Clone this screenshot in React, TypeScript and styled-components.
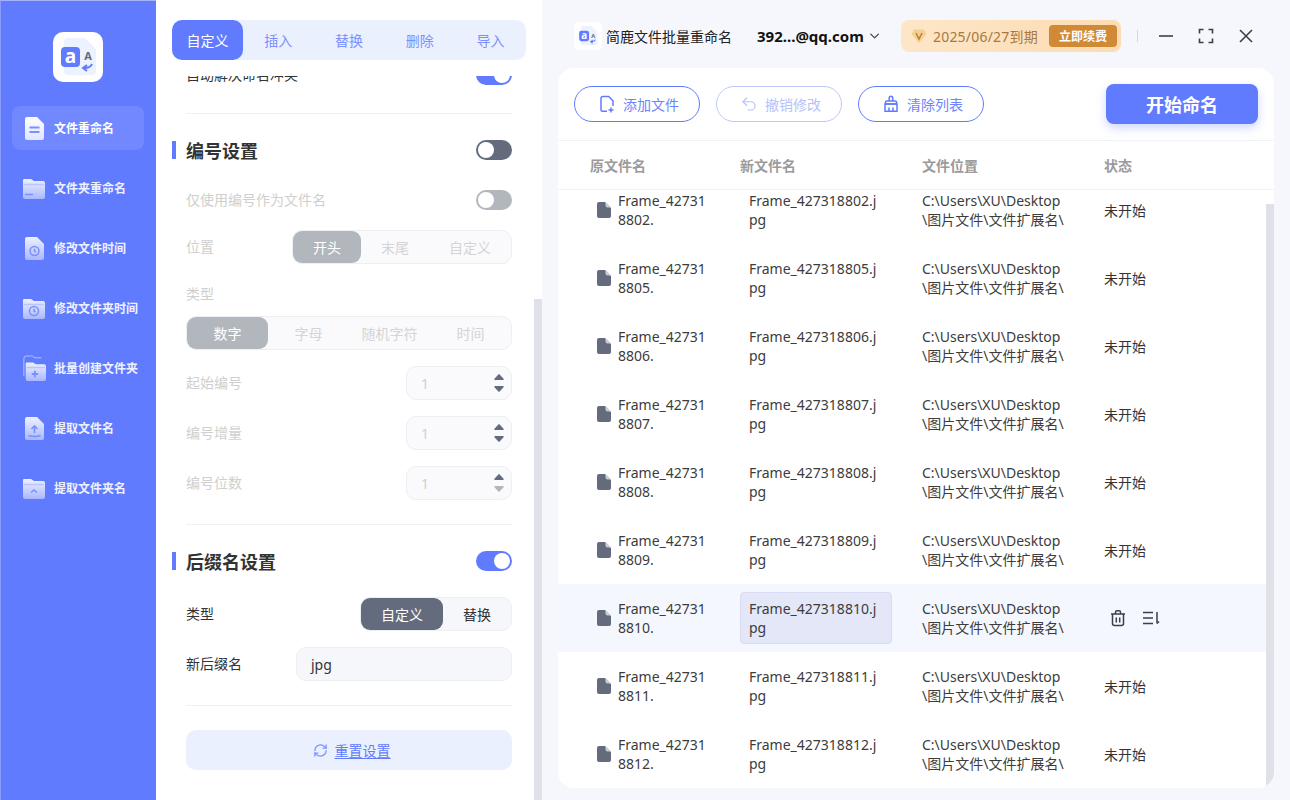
import React from 'react';
import styled, { createGlobalStyle } from 'styled-components';
import { ChevronDown, RefreshCw, Undo2 } from 'lucide-react';

const BLUE = '#617bff';
const SLATE = '#636b7d';
const FONT = '"Noto Sans", "Noto Sans CJK SC", sans-serif';

const GlobalStyle = createGlobalStyle`
    html, body {
        margin: 0;
        padding: 0;
        height: 100%;
        overflow: hidden;
        font-family: ${FONT};
        color: #333;
    }
    * {
        box-sizing: border-box;
    }
`;

const Page = styled.div`
    display: flex;
    width: 1290px;
    height: 800px;
    overflow: hidden;
    background: #f6f7fc;
`;

/* sidebar */
const Sidebar = styled.nav`
    width: 156px;
    flex: none;
    display: flex;
    flex-direction: column;
    align-items: center;
    padding-top: 31px;
    background: ${BLUE};
    border-top: 1px solid #a6b4fb;
    border-left: 1px solid #8b9dfc;
`;

const LogoBox = styled.div`
    width: 50px;
    height: 50px;
    border-radius: 10px;
    background: #fff;
    margin-bottom: 24px;
    margin-left: -1px;
    display: flex;
    align-items: center;
    justify-content: center;
`;

const NavList = styled.div`
    display: flex;
    flex-direction: column;
    gap: 16px;
    width: 132px;
    margin-left: -1px;
`;

const NavItem = styled.div<{ $active?: boolean }>`
    height: 44px;
    display: flex;
    align-items: center;
    gap: 8px;
    padding-left: 10px;
    border-radius: 8px;
    background: ${(p) => (p.$active ? 'rgba(255,255,255,0.1)' : 'transparent')};
    color: ${(p) => (p.$active ? '#fff' : '#eef1ff')};
    font-size: 12px;
    font-weight: 700;
    white-space: nowrap;
`;

const NavIconBox = styled.span`
    width: 24px;
    height: 26px;
    flex: none;
    display: flex;
    align-items: center;
    justify-content: center;
`;

/* settings panel */
const Panel = styled.section`
    width: 386px;
    flex: none;
    display: flex;
    background: #fff;
`;

const PanelMain = styled.div`
    width: 378px;
    display: flex;
    flex-direction: column;
`;

const PanelTrack = styled.div`
    width: 8px;
    margin-top: 299px;
    background: #e0e0e8;
`;

const Tabs = styled.div`
    display: grid;
    grid-template-columns: repeat(5, 1fr);
    width: 354px;
    height: 40px;
    margin: 20px 0 16px 16px;
    flex: none;
    border-radius: 10px;
    background: #eaf0fe;
`;

const Tab = styled.div<{ $active?: boolean }>`
    display: flex;
    align-items: center;
    justify-content: center;
    border-radius: 10px;
    font-size: 14px;
    color: ${(p) => (p.$active ? '#fff' : '#7c91ff')};
    background: ${(p) => (p.$active ? BLUE : 'transparent')};
`;

const ScrollArea = styled.div`
    flex: 1;
    overflow: hidden;
    padding: 0 22px 0 30px;
`;

const ScrollInner = styled.div`
    margin-top: -11px;
`;

const Row = styled.div<{ $top?: number }>`
    display: flex;
    align-items: center;
    justify-content: space-between;
    margin-top: ${(p) => p.$top ?? 0}px;
`;

const Divider = styled.div<{ $top: number }>`
    height: 1px;
    background: #f0f1f4;
    margin-top: ${(p) => p.$top}px;
`;

const Heading = styled.h2`
    display: flex;
    align-items: center;
    gap: 10px;
    height: 20px;
    margin: 0 0 0 -14px;
    font-size: 18px;
    font-weight: 700;
    line-height: 20px;
    color: #333;
    &::before {
        content: '';
        width: 4px;
        height: 18px;
        background: ${BLUE};
    }
`;

const HeadingText = styled.span`
    margin-top: 2px;
`;

const Label = styled.span<{ $off?: boolean }>`
    font-size: 14px;
    line-height: 20px;
    color: ${(p) => (p.$off ? '#cfcfcf' : '#333')};
`;

const Toggle = styled.span<{ $color: string; $on?: boolean }>`
    width: 36px;
    height: 20px;
    padding: 2px;
    border-radius: 10px;
    display: flex;
    justify-content: ${(p) => (p.$on ? 'flex-end' : 'flex-start')};
    background: ${(p) => p.$color};
    &::after {
        content: '';
        width: 16px;
        height: 16px;
        border-radius: 50%;
        background: #fff;
    }
`;

const Seg = styled.div<{ $off?: boolean; $cols?: number }>`
    height: 34px;
    width: ${(p) => (p.$cols ? '100%' : 'auto')};
    display: ${(p) => (p.$cols ? 'grid' : 'flex')};
    grid-template-columns: repeat(${(p) => p.$cols ?? 1}, minmax(0, 1fr));
    border: 1px solid #eeeff3;
    border-radius: 10px;
    background: ${(p) => (p.$off ? '#fafafc' : '#f6f7fb')};
`;

const SegItem = styled.div<{ $active?: boolean; $off?: boolean; $flush?: boolean }>`
    display: flex;
    align-items: center;
    justify-content: center;
    padding: 0 ${(p) => (p.$flush ? 0 : 20)}px;
    border-radius: 9px;
    font-size: 14px;
    white-space: nowrap;
    color: ${(p) => (p.$active ? '#fff' : p.$off ? '#d4d4d6' : '#333')};
    background: ${(p) => (!p.$active ? 'transparent' : p.$off ? '#b2b6bd' : SLATE)};
`;

const Field = styled.div<{ $w: number; $off?: boolean }>`
    width: ${(p) => p.$w}px;
    height: 34px;
    display: flex;
    align-items: center;
    justify-content: space-between;
    padding: 0 7px 0 14px;
    border: 1px solid #eeeff3;
    border-radius: 10px;
    background: ${(p) => (p.$off ? '#fafafc' : '#f6f7fb')};
    font-size: 14px;
    color: ${(p) => (p.$off ? '#cfcfcf' : '#333')};
`;

const Stepper = styled.span`
    display: flex;
    flex-direction: column;
    gap: 6px;
`;

const ResetButton = styled.div`
    height: 40px;
    margin-top: 24px;
    padding-left: 5px;
    display: flex;
    align-items: center;
    justify-content: center;
    gap: 7px;
    border-radius: 10px;
    background: #eaf0fe;
    color: ${BLUE};
    font-size: 14px;
    text-decoration: underline;
    text-underline-offset: 2px;
`;

/* right side */
const Content = styled.main`
    flex: 1;
    min-width: 0;
    display: flex;
    flex-direction: column;
    padding: 0 16px 12px;
`;

const TopBar = styled.header`
    height: 68px;
    flex: none;
    display: flex;
    align-items: center;
    padding: 4px 0 0 16px;
`;

const AppLogo = styled.span`
    width: 28px;
    height: 28px;
    flex: none;
    border-radius: 4px;
    background: #fff;
    display: flex;
    align-items: center;
    justify-content: center;
    margin-right: 4px;
`;

const AppName = styled.span`
    font-size: 14px;
    color: #222;
    flex: none;
    white-space: nowrap;
    margin-right: 25px;
`;

const Account = styled.span`
    width: 125px;
    flex: none;
    font-size: 15px;
    font-weight: 700;
    color: #111;
    display: flex;
    align-items: center;
    gap: 3px;
    margin-right: 19px;
    white-space: nowrap;
`;

const VipBadge = styled.div`
    width: 220px;
    height: 32px;
    flex: none;
    display: flex;
    align-items: center;
    gap: 6px;
    padding: 0 4px 0 10px;
    border-radius: 8px;
    background: linear-gradient(90deg, #fde6c8, #fcdcb2);
    color: #a9783f;
    font-size: 14px;
    letter-spacing: 0.2px;
    white-space: nowrap;
`;

const RenewButton = styled.span`
    margin-left: auto;
    width: 68px;
    height: 22px;
    display: flex;
    align-items: center;
    justify-content: center;
    border-radius: 4px;
    background: #d08a35;
    color: #fff;
    font-size: 12px;
    font-weight: 700;
    letter-spacing: 0;
`;

const BarSep = styled.span`
    width: 1px;
    height: 12px;
    flex: none;
    background: #d5d7dd;
    margin: 0 20px 0 16px;
`;

const WinControls = styled.div`
    display: flex;
    flex: none;
    gap: 24px;
    color: #3a3f4b;
`;

const Card = styled.div`
    flex: 1;
    min-height: 0;
    display: flex;
    flex-direction: column;
    border-radius: 16px;
    background: #fff;
    overflow: hidden;
`;

const Toolbar = styled.div`
    height: 73px;
    flex: none;
    display: flex;
    align-items: center;
    gap: 16px;
    padding: 0 16px;
    border-bottom: 1px solid #f1f2f5;
`;

const PillButton = styled.div<{ $off?: boolean }>`
    width: 126px;
    height: 36px;
    display: flex;
    align-items: center;
    justify-content: center;
    gap: 7px;
    padding-left: 3px;
    border: 1px solid ${(p) => (p.$off ? '#bcc8fb' : BLUE)};
    border-radius: 18px;
    font-size: 14px;
    color: ${(p) => (p.$off ? '#b6c2fb' : '#6d85fb')};
`;

const StartButton = styled.div`
    width: 152px;
    height: 40px;
    margin-left: auto;
    display: flex;
    align-items: center;
    justify-content: center;
    border-radius: 8px;
    background: ${BLUE};
    color: #fff;
    font-size: 18px;
    font-weight: 700;
    box-shadow: 0 4px 10px rgba(97, 123, 255, 0.3);
`;

const columns = '150px 182px 182px 1fr';

const TableHead = styled.div`
    height: 49px;
    flex: none;
    display: grid;
    grid-template-columns: ${columns};
    align-items: center;
    padding-left: 32px;
    border-bottom: 1px solid #f1f2f5;
    font-size: 14px;
    font-weight: 700;
    color: #9b9b9b;
`;

const TableBody = styled.div`
    flex: 1;
    min-height: 0;
    display: flex;
`;

const RowList = styled.div`
    flex: 1;
    min-width: 0;
    overflow: hidden;
`;

const RowScroll = styled.div`
    margin-top: -14px;
`;

const ListTrack = styled.div`
    width: 8px;
    margin-top: 14px;
    background: #e0e0e8;
`;

const FileRow = styled.div<{ $hover?: boolean }>`
    height: 68px;
    display: grid;
    grid-template-columns: ${columns};
    align-items: center;
    padding-left: 32px;
    font-size: 14px;
    line-height: 19px;
    color: #3c3c3c;
    background: ${(p) => (p.$hover ? '#f4f7fe' : 'transparent')};
`;

const NameCell = styled.div`
    display: flex;
    align-items: center;
    gap: 7px;
    padding-left: 7px;
`;

const Line = styled.span`
    display: block;
    white-space: nowrap;
`;

const NewName = styled.div<{ $edit?: boolean }>`
    width: 152px;
    height: 52px;
    display: flex;
    flex-direction: column;
    justify-content: center;
    padding-left: 8px;
    border: 1px solid ${(p) => (p.$edit ? '#d9dcf3' : 'transparent')};
    border-radius: 4px;
    background: ${(p) => (p.$edit ? '#e4e7f8' : 'transparent')};
`;

const Status = styled.div`
    padding-top: 1px;
    color: #333;
`;

const RowActions = styled.div`
    display: flex;
    align-items: center;
    gap: 15px;
    padding-left: 5px;
    color: #3a3f4b;
`;

/* drawings */
const AppMark: React.FC<{ size: number }> = ({ size }) => (
    <svg width={size} height={size} viewBox="0 0 50 50">
        <path d="M15 6h17l11 11v22a4 4 0 0 1-4 4H15a4 4 0 0 1-4-4V10a4 4 0 0 1 4-4z" fill="#edf2ff" />
        <rect x="8" y="15" width="19" height="20" rx="4" fill={BLUE} />
        <text x="17.5" y="31" textAnchor="middle" fontSize="19" fontWeight="700" fill="#fff" fontFamily="Noto Sans, sans-serif">a</text>
        <text x="35" y="28" textAnchor="middle" fontSize="11" fontWeight="700" fill={SLATE} fontFamily="Noto Sans, sans-serif">A</text>
        <path d="M39 32c-1 3-4 4-8 4m3-3-4 3 4 3" fill="none" stroke={BLUE} strokeWidth="2" />
    </svg>
);

const Gradient: React.FC<{ id: string; from?: string; to?: string }> = ({ id, from = '#eef1ff', to = '#a9b8fd' }) => (
    <defs>
        <linearGradient id={id} x1="0" y1="0" x2="0" y2="1">
            <stop offset="0" stopColor={from} />
            <stop offset="1" stopColor={to} />
        </linearGradient>
    </defs>
);

const DOC = 'M3 1h10l7 7v14a2 2 0 0 1-2 2H3a2 2 0 0 1-2-2V3a2 2 0 0 1 2-2z';
const FOLDER = 'M2 3h7l3 2h9a2 2 0 0 1 2 2v14a2 2 0 0 1-2 2H3a2 2 0 0 1-2-2V4a1 1 0 0 1 1-1z';

const NavIcon: React.FC<{ kind: number }> = ({ kind }) => {
    const id = `nav-grad-${kind}`;
    const mark = '#7c90fb';
    const isDoc = kind === 0 || kind === 2 || kind === 5;
    if (kind === 0) {
        return (
            <svg width="21" height="25" viewBox="0 0 21 25">
                <Gradient id={id} from="#ffffff" to="#dfe5ff" />
                <path d={DOC} fill={`url(#${id})`} />
                <path d="M5.500 11.500h10M5.500 16h10" stroke={mark} strokeWidth="2" />
            </svg>
        );
    }
    return (
        <svg width={isDoc ? 21 : kind === 4 ? 26 : 24} height={isDoc ? 25 : kind === 4 ? 28 : 24} viewBox={isDoc ? '0 0 21 25' : kind === 4 ? '-3 -5 26 28' : '0 0 24 24'}>
            <Gradient id={id} />
            {kind === 4 && <path d="M-1 18V-1a3 3 0 0 1 3-3h6l3 2h7" fill="none" stroke="#b9c5fe" strokeWidth="1" />}
            <path d={isDoc ? DOC : FOLDER} fill={`url(#${id})`} />
            {!isDoc && <path d="M2 8.500h20" stroke="#b9c5fe" strokeWidth="1.500" />}
            {kind === 1 && <path d="M3 18.500h8" stroke={mark} strokeWidth="1.500" />}
            {(kind === 2 || kind === 3) && (
                <g fill="none" stroke={mark} strokeWidth="1.500">
                    <circle cx={kind === 2 ? 10.500 : 12} cy={15} r="4.500" />
                    <path d={kind === 2 ? 'M10.500 12.800V15l1.500 1' : 'M12 12.800V15l1.500 1'} />
                </g>
            )}
            {kind === 4 && <path d="M11 12v7M7.500 15.500h7" stroke={mark} strokeWidth="2" />}
            {kind === 5 && <path d="M10.500 17v-6.500M7.500 13l3-3 3 3M4.500 19.500c3 1.300 9 1.300 12 0" fill="none" stroke={mark} strokeWidth="1.600" />}
            {kind === 6 && <path d="M9 16.500l3-2.500 3 2.500" fill="none" stroke={mark} strokeWidth="1.600" />}
        </svg>
    );
};

const FileGlyph = () => (
    <svg width="14" height="16" viewBox="0 0 14 16" style={{ flex: 'none' }}>
        <path d="M2 0h6l6 6v8a2 2 0 0 1-2 2H2a2 2 0 0 1-2-2V2a2 2 0 0 1 2-2z" fill={SLATE} />
        <path d="M8.500 0v3.500a2 2 0 0 0 2 2H14z" fill="#c9cdd6" />
    </svg>
);

const StepArrow: React.FC<{ down?: boolean; faint?: boolean }> = ({ down, faint }) => (
    <svg width="10" height="6" viewBox="0 0 10 6" style={{ display: 'block' }}>
        <path d={down ? 'M1 0h8a.8.8 0 0 1 .6 1.300L5.600 5.600a.8.8 0 0 1-1.200 0L.4 1.300A.8.8 0 0 1 1 0z' : 'M1 6h8a.8.8 0 0 0 .6-1.300L5.600.4a.8.8 0 0 0-1.200 0L.4 4.700A.8.8 0 0 0 1 6z'} fill={faint ? '#b2b6bd' : SLATE} />
    </svg>
);

const AddFileIcon = () => (
    <svg width="18" height="18" viewBox="0 0 18 18" fill="none" stroke={BLUE} strokeWidth="1.500">
        <path d="M9 16.300H4.500a1.500 1.500 0 0 1-1.500-1.500V3a1.500 1.500 0 0 1 1.500-1.500h6.200L15 5.800v5.200" />
        <path d="M13 12.500v5M10.500 15h5" />
    </svg>
);

const BrushIcon = () => (
    <svg width="18" height="18" viewBox="0 0 18 18" fill="none" stroke={BLUE} strokeWidth="1.500">
        <path d="M7.200 6V3a1.800 1.800 0 0 1 3.600 0v3" />
        <path d="M3.500 9V7.300A1.300 1.300 0 0 1 4.800 6h8.400a1.300 1.300 0 0 1 1.300 1.300V9z" />
        <path d="M3 9h12v7.200H3zM7 12.500v3.700M11 12.500v3.700" />
    </svg>
);

const VipIcon = () => (
    <svg width="16" height="16" viewBox="0 0 16 16">
        <path d="M3 1.500h10L15.500 6 8 15 .5 6z" fill="#f6cf95" />
        <path d="M5 5l3 6 3-6" fill="none" stroke="#b98235" strokeWidth="1.500" />
    </svg>
);

const MinIcon = () => (
    <svg width="16" height="16" viewBox="0 0 16 16" stroke="currentColor" strokeWidth="1.600"><path d="M1 8h14" /></svg>
);

const FullIcon = () => (
    <svg width="16" height="16" viewBox="0 0 16 16" fill="none" stroke="currentColor" strokeWidth="1.600">
        <path d="M1.500 5.500V1.500h4M10.500 1.500h4v4M14.500 10.500v4h-4M5.500 14.500h-4v-4" />
    </svg>
);

const CloseIcon = () => (
    <svg width="16" height="16" viewBox="0 0 16 16" fill="none" stroke="currentColor" strokeWidth="1.600">
        <path d="M2 2l12 12M14 2L2 14" />
    </svg>
);

const TrashIcon = () => (
    <svg width="18" height="18" viewBox="0 0 18 18" fill="none" stroke="currentColor" strokeWidth="1.500">
        <path d="M3.500 5h11v9.500a2 2 0 0 1-2 2h-7a2 2 0 0 1-2-2zM2 5h14M6.500 5V3.200a1.500 1.500 0 0 1 1.500-1.500h2a1.500 1.500 0 0 1 1.500 1.500V5M7.300 8.500v5M10.700 8.500v5" />
    </svg>
);

const MoveIcon = () => (
    <svg width="18" height="18" viewBox="0 0 18 18" fill="none" stroke="currentColor" strokeWidth="1.500">
        <path d="M1 3.500h10M1 9h10M1 14.500h10M15 3v11.500M15 14.500l2-2" />
    </svg>
);

const navItems = ['文件重命名', '文件夹重命名', '修改文件时间', '修改文件夹时间', '批量创建文件夹', '提取文件名', '提取文件夹名'];
const tabs = ['自定义', '插入', '替换', '删除', '导入'];
const fileIds = ['802', '805', '806', '807', '808', '809', '810', '811', '812'];

const NumberField: React.FC<{ label: string; top: number; faintDown?: boolean }> = ({ label, top, faintDown }) => (
    <Row $top={top}>
        <Label $off>{label}</Label>
        <Field $w={106} $off>
            1
            <Stepper>
                <StepArrow />
                <StepArrow down faint={faintDown} />
            </Stepper>
        </Field>
    </Row>
);

const App: React.FC = () => (
    <Page>
        <GlobalStyle />
        <Sidebar>
            <LogoBox>
                <AppMark size={50} />
            </LogoBox>
            <NavList>
                {navItems.map((item, i) => (
                    <NavItem key={item} $active={i === 0}>
                        <NavIconBox>
                            <NavIcon kind={i} />
                        </NavIconBox>
                        {item}
                    </NavItem>
                ))}
            </NavList>
        </Sidebar>

        <Panel>
            <PanelMain>
                <Tabs>
                    {tabs.map((t, i) => (
                        <Tab key={t} $active={i === 0}>{t}</Tab>
                    ))}
                </Tabs>
                <ScrollArea>
                    <ScrollInner>
                        <Row>
                            <Label>自动解决命名冲突</Label>
                            <Toggle $color={BLUE} $on />
                        </Row>
                        <Divider $top={28} />

                        <Row $top={26}>
                            <Heading><HeadingText>编号设置</HeadingText></Heading>
                            <Toggle $color={SLATE} />
                        </Row>
                        <Row $top={30}>
                            <Label $off>仅使用编号作为文件名</Label>
                            <Toggle $color="#b2b6bd" />
                        </Row>
                        <Row $top={20}>
                            <Label $off>位置</Label>
                            <Seg $off>
                                <SegItem $active $off>开头</SegItem>
                                <SegItem $off>末尾</SegItem>
                                <SegItem $off>自定义</SegItem>
                            </Seg>
                        </Row>
                        <Row $top={20}>
                            <Label $off>类型</Label>
                        </Row>
                        <Row $top={12}>
                            <Seg $off $cols={4}>
                                <SegItem $active $off $flush>数字</SegItem>
                                <SegItem $off $flush>字母</SegItem>
                                <SegItem $off $flush>随机字符</SegItem>
                                <SegItem $off $flush>时间</SegItem>
                            </Seg>
                        </Row>
                        <NumberField label="起始编号" top={16} />
                        <NumberField label="编号增量" top={16} />
                        <NumberField label="编号位数" top={16} faintDown />
                        <Divider $top={24} />

                        <Row $top={26}>
                            <Heading><HeadingText>后缀名设置</HeadingText></Heading>
                            <Toggle $color={BLUE} $on />
                        </Row>
                        <Row $top={26}>
                            <Label>类型</Label>
                            <Seg>
                                <SegItem $active>自定义</SegItem>
                                <SegItem>替换</SegItem>
                            </Seg>
                        </Row>
                        <Row $top={16}>
                            <Label>新后缀名</Label>
                            <Field $w={216}>jpg</Field>
                        </Row>
                        <Divider $top={24} />
                        <ResetButton>
                            <RefreshCw size={15} color="#7c91ff" />
                            重置设置
                        </ResetButton>
                    </ScrollInner>
                </ScrollArea>
            </PanelMain>
            <PanelTrack />
        </Panel>

        <Content>
            <TopBar>
                <AppLogo>
                    <AppMark size={26} />
                </AppLogo>
                <AppName>简鹿文件批量重命名</AppName>
                <Account>
                    392...@qq.com
                    <ChevronDown size={16} color="#444" />
                </Account>
                <VipBadge>
                    <VipIcon />
                    2025/06/27到期
                    <RenewButton>立即续费</RenewButton>
                </VipBadge>
                <BarSep />
                <WinControls>
                    <MinIcon />
                    <FullIcon />
                    <CloseIcon />
                </WinControls>
            </TopBar>

            <Card>
                <Toolbar>
                    <PillButton>
                        <AddFileIcon />
                        添加文件
                    </PillButton>
                    <PillButton $off>
                        <Undo2 size={18} strokeWidth={1.5} color="#b6c2fb" />
                        撤销修改
                    </PillButton>
                    <PillButton>
                        <BrushIcon />
                        清除列表
                    </PillButton>
                    <StartButton>开始命名</StartButton>
                </Toolbar>
                <TableHead>
                    <span>原文件名</span>
                    <span>新文件名</span>
                    <span>文件位置</span>
                    <span>状态</span>
                </TableHead>
                <TableBody>
                    <RowList>
                        <RowScroll>
                            {fileIds.map((id) => {
                                const active = id === '810';
                                return (
                                    <FileRow key={id} $hover={active}>
                                        <NameCell>
                                            <FileGlyph />
                                            <div>
                                                <Line>Frame_42731</Line>
                                                <Line>8{id}.</Line>
                                            </div>
                                        </NameCell>
                                        <NewName $edit={active}>
                                            <Line>Frame_427318{id}.j</Line>
                                            <Line>pg</Line>
                                        </NewName>
                                        <div>
                                            <Line>C:\Users\XU\Desktop</Line>
                                            <Line>\图片文件\文件扩展名\</Line>
                                        </div>
                                        {active ? (
                                            <RowActions>
                                                <TrashIcon />
                                                <MoveIcon />
                                            </RowActions>
                                        ) : (
                                            <Status>未开始</Status>
                                        )}
                                    </FileRow>
                                );
                            })}
                        </RowScroll>
                    </RowList>
                    <ListTrack />
                </TableBody>
            </Card>
        </Content>
    </Page>
);

export default App;
